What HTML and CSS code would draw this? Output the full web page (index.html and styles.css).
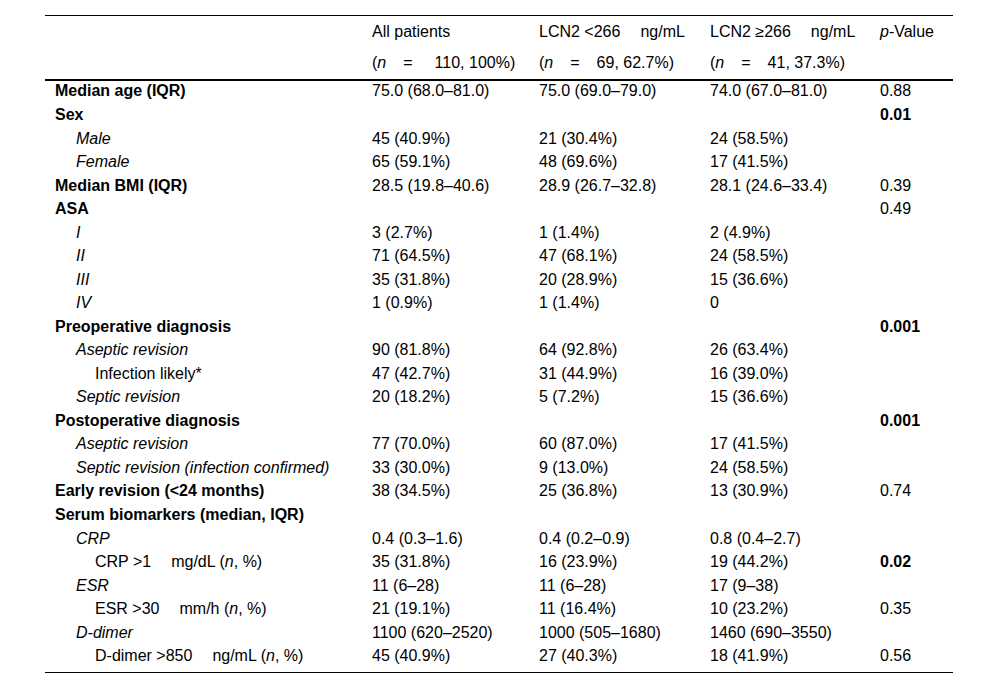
FILE: index.html
```html
<!DOCTYPE html>
<html lang="en">
<head>
<meta charset="utf-8">
<title>Patient characteristics</title>
<link rel="stylesheet" href="styles.css">
</head>
<body>
<div class="page">
<table class="data">
  <colgroup>
    <col class="c-label"><col class="c-all"><col class="c-low"><col class="c-high"><col class="c-p">
  </colgroup>
  <thead>
    <tr class="h1">
      <th></th>
      <th>All patients</th>
      <th>LCN2 &lt;266<span class="gap">ng/mL</span></th>
      <th>LCN2 ≥266<span class="gap">ng/mL</span></th>
      <th><i>p</i>-Value</th>
    </tr>
    <tr class="h2">
      <th></th>
      <th>(<i>n</i><span class="eq eq-wide">=</span>110, 100%)</th>
      <th>(<i>n</i><span class="eq">=</span>69, 62.7%)</th>
      <th>(<i>n</i><span class="eq">=</span>41, 37.3%)</th>
      <th></th>
    </tr>
  </thead>
  <tbody>
    <tr><td class="sec">Median age (IQR)</td><td>75.0 (68.0–81.0)</td><td>75.0 (69.0–79.0)</td><td>74.0 (67.0–81.0)</td><td>0.88</td></tr>
    <tr><td class="sec">Sex</td><td></td><td></td><td></td><td class="sig">0.01</td></tr>
    <tr><td class="l1">Male</td><td>45 (40.9%)</td><td>21 (30.4%)</td><td>24 (58.5%)</td><td></td></tr>
    <tr><td class="l1">Female</td><td>65 (59.1%)</td><td>48 (69.6%)</td><td>17 (41.5%)</td><td></td></tr>
    <tr><td class="sec">Median BMI (IQR)</td><td>28.5 (19.8–40.6)</td><td>28.9 (26.7–32.8)</td><td>28.1 (24.6–33.4)</td><td>0.39</td></tr>
    <tr><td class="sec">ASA</td><td></td><td></td><td></td><td>0.49</td></tr>
    <tr><td class="l1">I</td><td>3 (2.7%)</td><td>1 (1.4%)</td><td>2 (4.9%)</td><td></td></tr>
    <tr><td class="l1">II</td><td>71 (64.5%)</td><td>47 (68.1%)</td><td>24 (58.5%)</td><td></td></tr>
    <tr><td class="l1">III</td><td>35 (31.8%)</td><td>20 (28.9%)</td><td>15 (36.6%)</td><td></td></tr>
    <tr><td class="l1">IV</td><td>1 (0.9%)</td><td>1 (1.4%)</td><td>0</td><td></td></tr>
    <tr><td class="sec">Preoperative diagnosis</td><td></td><td></td><td></td><td class="sig">0.001</td></tr>
    <tr><td class="l1">Aseptic revision</td><td>90 (81.8%)</td><td>64 (92.8%)</td><td>26 (63.4%)</td><td></td></tr>
    <tr><td class="l2">Infection likely*</td><td>47 (42.7%)</td><td>31 (44.9%)</td><td>16 (39.0%)</td><td></td></tr>
    <tr><td class="l1">Septic revision</td><td>20 (18.2%)</td><td>5 (7.2%)</td><td>15 (36.6%)</td><td></td></tr>
    <tr><td class="sec">Postoperative diagnosis</td><td></td><td></td><td></td><td class="sig">0.001</td></tr>
    <tr><td class="l1">Aseptic revision</td><td>77 (70.0%)</td><td>60 (87.0%)</td><td>17 (41.5%)</td><td></td></tr>
    <tr><td class="l1">Septic revision (infection confirmed)</td><td>33 (30.0%)</td><td>9 (13.0%)</td><td>24 (58.5%)</td><td></td></tr>
    <tr><td class="sec">Early revision (&lt;24 months)</td><td>38 (34.5%)</td><td>25 (36.8%)</td><td>13 (30.9%)</td><td>0.74</td></tr>
    <tr><td class="sec">Serum biomarkers (median, IQR)</td><td></td><td></td><td></td><td></td></tr>
    <tr><td class="l1">CRP</td><td>0.4 (0.3–1.6)</td><td>0.4 (0.2–0.9)</td><td>0.8 (0.4–2.7)</td><td></td></tr>
    <tr><td class="l2">CRP &gt;1<span class="gap">mg/dL (<i>n</i>, %)</span></td><td>35 (31.8%)</td><td>16 (23.9%)</td><td>19 (44.2%)</td><td class="sig">0.02</td></tr>
    <tr><td class="l1">ESR</td><td>11 (6–28)</td><td>11 (6–28)</td><td>17 (9–38)</td><td></td></tr>
    <tr><td class="l2">ESR &gt;30<span class="gap">mm/h (<i>n</i>, %)</span></td><td>21 (19.1%)</td><td>11 (16.4%)</td><td>10 (23.2%)</td><td>0.35</td></tr>
    <tr><td class="l1">D-dimer</td><td>1100 (620–2520)</td><td>1000 (505–1680)</td><td>1460 (690–3550)</td><td></td></tr>
    <tr><td class="l2">D-dimer &gt;850<span class="gap">ng/mL (<i>n</i>, %)</span></td><td>45 (40.9%)</td><td>27 (40.3%)</td><td>18 (41.9%)</td><td>0.56</td></tr>
  </tbody>
</table>
</div>
</body>
</html>
```
FILE: styles.css
```css
html, body {
  margin: 0;
  padding: 0;
  background: #ffffff;
}

.page {
  padding: 15px 0 0 45px;
  font-family: "Liberation Sans", Arial, sans-serif;
  font-size: 16px;
  color: #000;
}

.data {
  width: 908px;
  table-layout: fixed;
  border-collapse: separate;
  border-spacing: 0;
}

.c-label { width: 317px; }
.c-all { width: 167px; }
.c-low { width: 171px; }
.c-high { width: 170px; }
.c-p { width: 83px; }

.data th,
.data td {
  text-align: left;
  vertical-align: top;
  font-weight: normal;
  line-height: 16px;
  padding: 0 0 0 10px;
  white-space: nowrap;
}

.data thead .h1 th {
  border-top: 1px solid #000;
  padding-top: 8px;
  padding-bottom: 7px;
}

.data thead .h2 th {
  padding-top: 8px;
  padding-bottom: 8px;
  border-bottom: 2px solid #000;
}

.data tbody td {
  padding-top: 2.45px;
  padding-bottom: 5.1px;
}

.data tbody tr:last-child td {
  padding-bottom: 8.1px;
  border-bottom: 1px solid #000;
}

.data td.sec {
  font-weight: bold;
}

.data td.sig {
  font-weight: bold;
}

.data td.l1 {
  padding-left: 31px;
  font-style: italic;
}

.data td.l2 {
  padding-left: 50px;
}

.gap {
  margin-left: 20px;
}

.eq {
  margin: 0 17px 0 17px;
}

.eq-wide {
  margin-right: 22px;
}
```
